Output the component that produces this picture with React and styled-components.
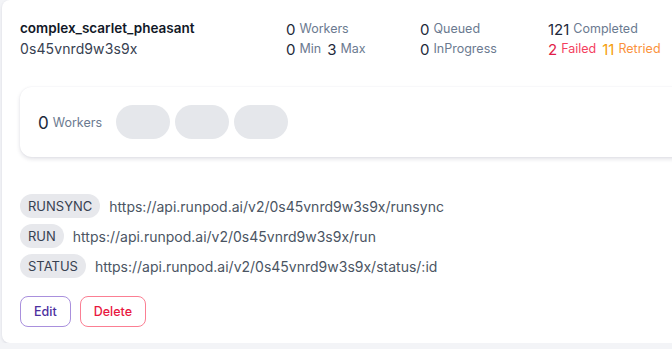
import React from "react";
import styled, { createGlobalStyle } from "styled-components";

const GlobalStyle = createGlobalStyle`
  html, body {
    margin: 0;
    padding: 0;
    background: #f3f4f7;
    overflow: hidden;
  }
  body {
    font-family: Inter, "Noto Sans", sans-serif;
  }
`;

const Page = styled.div`
  padding: 0 0 0 2px;
  width: 740px;
`;

const Card = styled.div`
  background: #fff;
  border-radius: 8px;
  padding: 18px 18px 16px;
  box-shadow: 0 1px 3px rgba(30, 30, 70, 0.12);
`;

const Header = styled.div`
  display: grid;
  grid-template-columns: 266px 134px 128px auto;
  align-items: start;
`;

const Title = styled.div`
  font-size: 13.5px;
  font-weight: 600;
  color: #111827;
  line-height: 20px;
`;

const SubId = styled.div`
  font-size: 14px;
  color: #374151;
  line-height: 21px;
  letter-spacing: 0.1px;
`;

const StatCol = styled.div`
  display: flex;
  flex-direction: column;
`;

const StatRow = styled.div`
  display: flex;
  align-items: center;
  height: 20px;
  gap: 6px;
`;

const Stat = styled.span`
  display: inline-flex;
  align-items: center;
  gap: 4px;
`;

const Num = styled.span`
  font-size: ${(p) => p.$size || "15px"};
  color: ${(p) => p.$color || "#1e293b"};
  position: relative;
  top: 1px;
`;

const Label = styled.span`
  font-size: 12.5px;
  color: ${(p) => p.$color || "#6b7a90"};
`;

const WorkersCard = styled.div`
  margin-top: 28px;
  height: 70px;
  border-radius: 12px;
  background: #fff;
  box-shadow: 0 2px 4px rgba(40, 40, 80, 0.14), 0 0 2px rgba(40, 40, 80, 0.06);
  display: flex;
  align-items: center;
  padding-left: 18px;
  gap: 14px;
`;

const Pills = styled.div`
  display: flex;
  gap: 5px;
`;

const Pill = styled.div`
  width: 54px;
  height: 34px;
  border-radius: 17px;
  background: #e5e7eb;
`;

const Endpoints = styled.div`
  margin-top: 37px;
  display: flex;
  flex-direction: column;
  gap: 6px;
`;

const EndpointRow = styled.div`
  display: flex;
  align-items: center;
  gap: 9px;
`;

const Badge = styled.span`
  height: 24px;
  padding: 0 8px;
  border-radius: 12px;
  background: #e7e8ec;
  color: #374151;
  font-size: 13px;
  display: inline-flex;
  align-items: center;
`;

const Url = styled.span`
  font-size: 14px;
  color: #4b5563;
`;

const Actions = styled.div`
  margin-top: 18px;
  display: flex;
  gap: 9px;
`;

const Button = styled.button`
  height: 31px;
  padding: 0 13px;
  border-radius: 8px;
  background: #fff;
  border: 1px solid ${(p) => (p.$danger ? "#fb7f93" : "#a990dd")};
  color: ${(p) => (p.$danger ? "#e8173f" : "#4c2fa0")};
  font-family: Inter, sans-serif;
  font-size: 12.5px;
  font-weight: 500;
  cursor: pointer;
`;

const endpoints = [
  ["RUNSYNC", "https://api.runpod.ai/v2/0s45vnrd9w3s9x/runsync"],
  ["RUN", "https://api.runpod.ai/v2/0s45vnrd9w3s9x/run"],
  ["STATUS", "https://api.runpod.ai/v2/0s45vnrd9w3s9x/status/:id"],
];

export default function App() {
  return (
    <Page>
      <GlobalStyle />
      <Card>
        <Header>
          <div>
            <Title>complex_scarlet_pheasant</Title>
            <SubId>0s45vnrd9w3s9x</SubId>
          </div>
          <StatCol>
            <StatRow>
              <Stat>
                <Num>0</Num>
                <Label>Workers</Label>
              </Stat>
            </StatRow>
            <StatRow>
              <Stat>
                <Num>0</Num>
                <Label>Min</Label>
              </Stat>
              <Stat>
                <Num>3</Num>
                <Label>Max</Label>
              </Stat>
            </StatRow>
          </StatCol>
          <StatCol>
            <StatRow>
              <Stat>
                <Num>0</Num>
                <Label>Queued</Label>
              </Stat>
            </StatRow>
            <StatRow>
              <Stat>
                <Num>0</Num>
                <Label>InProgress</Label>
              </Stat>
            </StatRow>
          </StatCol>
          <StatCol>
            <StatRow>
              <Stat>
                <Num>121</Num>
                <Label>Completed</Label>
              </Stat>
            </StatRow>
            <StatRow>
              <Stat>
                <Num $color="#e11d48">2</Num>
                <Label $color="#f43f5e">Failed</Label>
              </Stat>
              <Stat>
                <Num $color="#f59e0b">11</Num>
                <Label $color="#fb923c">Retried</Label>
              </Stat>
            </StatRow>
          </StatCol>
        </Header>

        <WorkersCard>
          <Stat>
            <Num $size="17px">0</Num>
            <Label>Workers</Label>
          </Stat>
          <Pills>
            <Pill />
            <Pill />
            <Pill />
          </Pills>
        </WorkersCard>

        <Endpoints>
          {endpoints.map(([kind, url]) => (
            <EndpointRow key={kind}>
              <Badge>{kind}</Badge>
              <Url>{url}</Url>
            </EndpointRow>
          ))}
        </Endpoints>

        <Actions>
          <Button>Edit</Button>
          <Button $danger>Delete</Button>
        </Actions>
      </Card>
    </Page>
  );
}
